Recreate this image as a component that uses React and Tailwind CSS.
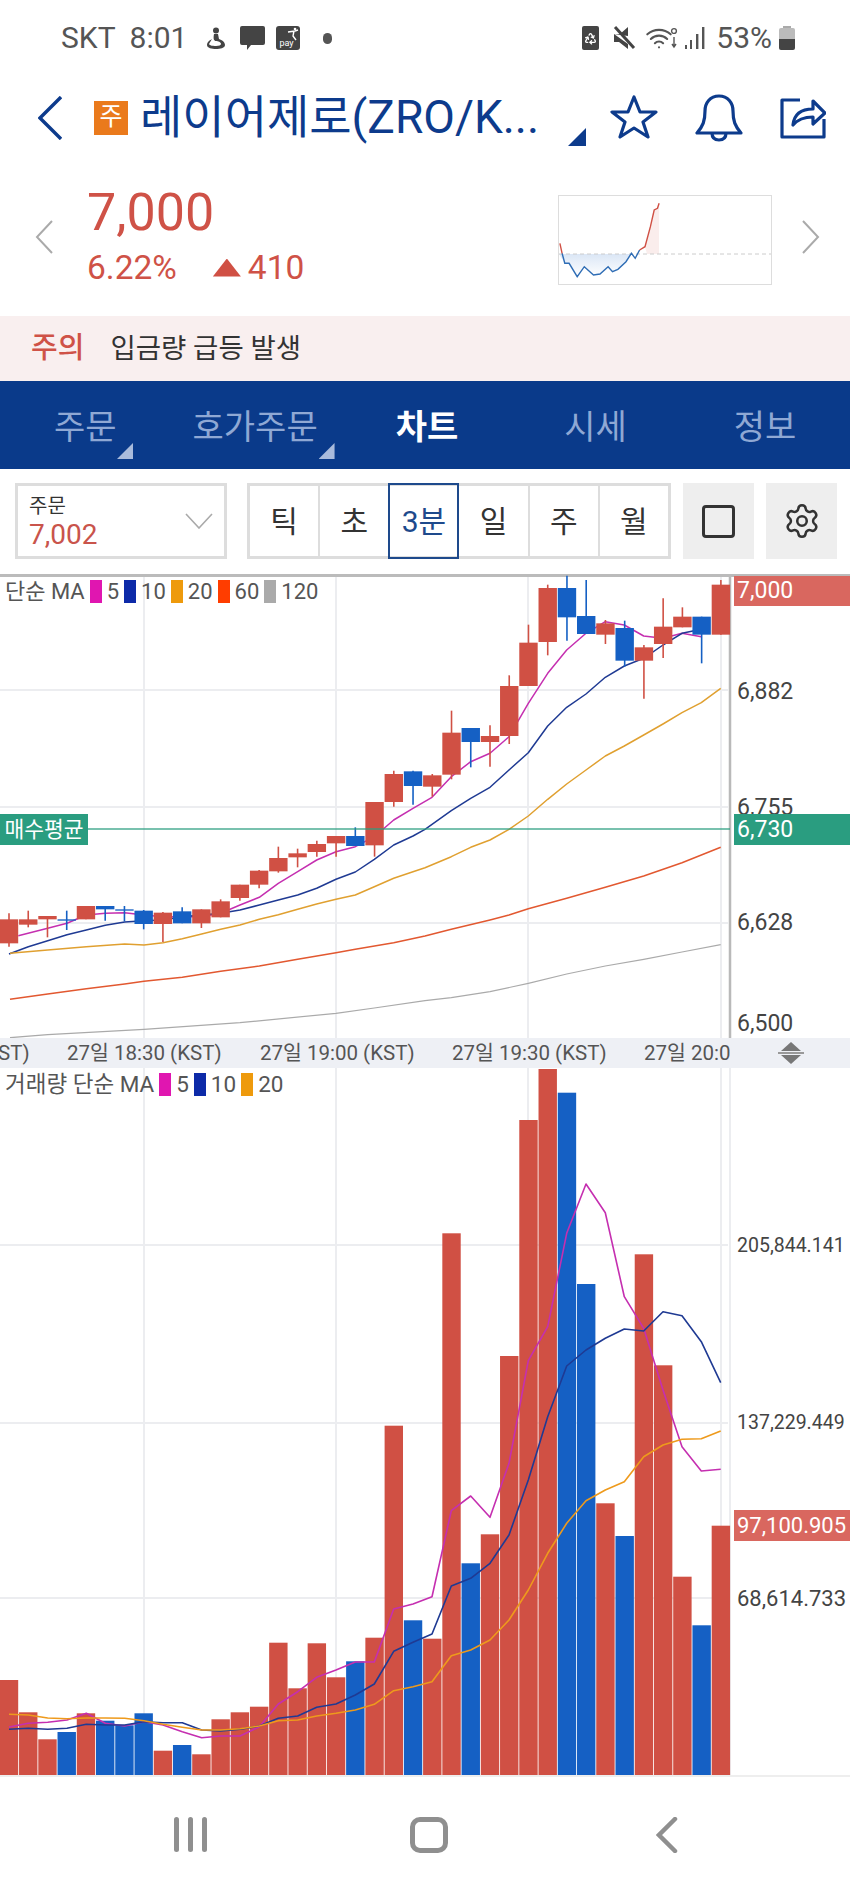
import React from 'react';
import { Settings, Recycle, Wifi } from 'lucide-react';

const RED = '#d05044';
const BLUE = '#1560c4';

// the numbers below were read off the reference crops, so each helper puts one crop back on the page
const c3 = ([x, y]) => [x / 3, 570 + y / 3];
const c4 = ([x, y]) => [425 + x / 3, 570 + y / 3];
const c6 = ([x, y]) => [425 + x / 3, 1030 + y / 3];
const c7 = ([x, y]) => [x / 3, 1480 + y / 3];
const c8 = ([x, y]) => [425 + x / 3, 1480 + y / 3];
const toPoints = (pts) => pts.map(([x, y]) => `${x.toFixed(1)},${y.toFixed(1)}`).join(' ');
const candleX = (i) => 9 + 19.24 * i;

// [up, wickTop, bodyTop, bodyBottom, wickBottom]
const candles = [
  [1, 1030, 1048, 1120, 1130], [1, 1022, 1048, 1064, 1072], [1, 1038, 1038, 1048, 1102], [0, 1022, 1048, 1052, 1080],
  [1, 1008, 1008, 1048, 1048], [0, 1008, 1008, 1018, 1052], [0, 1008, 1018, 1022, 1054], [0, 1020, 1022, 1062, 1078],
  [1, 1026, 1028, 1062, 1116], [0, 1012, 1024, 1060, 1060], [1, 1018, 1018, 1060, 1074], [1, 988, 994, 1042, 1042],
  [1, 944, 944, 984, 992], [1, 900, 902, 944, 955], [1, 830, 864, 904, 908], [1, 836, 850, 862, 892],
  [1, 812, 822, 846, 860], [1, 798, 798, 820, 860], [0, 772, 798, 828, 828], [1, 696, 696, 826, 860],
  [1, 602, 612, 696, 710], [0, 602, 604, 648, 704], [1, 612, 616, 650, 680], [1, 422, 488, 614, 628],
  [0, 474, 474, 516, 592], [1, 466, 498, 516, 590], [1, 316, 348, 498, 522], [1, 164, 218, 348, 348],
  [1, 44, 54, 216, 256], [0, 17, 54, 142, 212], [0, 30, 138, 192, 192], [1, 150, 160, 194, 222],
  [0, 152, 174, 272, 290], [1, 225, 232, 272, 386], [1, 85, 170, 222, 264], [1, 112, 140, 172, 172],
  [0, 140, 140, 194, 280], [1, 30, 44, 194, 194],
];

const priceLines = [
  {
    color: '#c52fb0', width: 1.5,
    pts: [[55, 1097], [143, 1075], [201, 1060], [259, 1035], [316, 1030], [374, 1028], [432, 1035], [489, 1040], [547, 1040], [605, 1040], [662, 1030], [720, 1005], [778, 982], [835, 940], [893, 905], [950, 870], [1008, 845], [1066, 830], [1123, 800], [1181, 750], [1239, 715]].map(c3)
      .concat([[21, 682], [79, 620], [137, 575], [195, 550], [252, 500], [310, 400], [368, 310], [425, 240], [483, 190], [541, 155], [598, 165], [656, 198], [714, 205], [771, 190], [829, 200]].map(c4)),
  },
  {
    color: '#1f3a93', width: 1.5,
    pts: [[27, 1152], [85, 1130], [143, 1112], [201, 1094], [259, 1080], [316, 1066], [374, 1056], [432, 1052], [489, 1050], [547, 1040], [605, 1035], [662, 1030], [720, 1020], [778, 1005], [835, 990], [893, 975], [950, 955], [1008, 928], [1066, 906], [1123, 868], [1181, 825], [1239, 798]].map(c3)
      .concat([[0, 778], [79, 722], [137, 685], [195, 652], [252, 600], [310, 548], [368, 468], [425, 412], [483, 372], [541, 322], [598, 288], [656, 265], [714, 225], [771, 190], [829, 178]].map(c4)),
  },
  {
    color: '#e0a030', width: 1.5,
    pts: [[30, 1150], [143, 1140], [259, 1130], [374, 1122], [432, 1125], [489, 1118], [547, 1106], [605, 1092], [662, 1078], [720, 1065], [778, 1048], [835, 1034], [893, 1018], [950, 1002], [1008, 988], [1066, 975], [1123, 950], [1181, 925], [1239, 905]].map(c3)
      .concat([[0, 893], [79, 860], [137, 832], [195, 810], [252, 778], [310, 738], [368, 688], [425, 642], [483, 600], [541, 558], [598, 528], [656, 495], [714, 462], [771, 428], [829, 398], [887, 355]].map(c4)),
  },
  {
    color: '#e25830', width: 1.5,
    pts: [[30, 1288], [143, 1272], [259, 1256], [374, 1242], [432, 1234], [547, 1222], [662, 1204], [778, 1188], [893, 1168], [1008, 1148], [1066, 1138], [1181, 1118], [1275, 1098]].map(c3)
      .concat([[79, 1078], [195, 1050], [252, 1035], [310, 1016], [425, 985], [541, 952], [656, 918], [771, 878], [887, 832]].map(c4)),
  },
  {
    color: '#aaaaaa', width: 1.2,
    pts: [[30, 1403], [143, 1394], [432, 1378], [720, 1358], [1008, 1330], [1123, 1314], [1275, 1292]].map(c3)
      .concat([[79, 1283], [195, 1265], [310, 1240], [425, 1212], [541, 1188], [656, 1168], [771, 1146], [887, 1124]].map(c4)),
  },
];

// [up, page y of the bar top]
const volumes = [
  [1, 1680], [1, 1712.3], [1, 1739.3], [0, 1732], [1, 1713.3], [0, 1720.7], [0, 1725.3], [0, 1713.3],
  [1, 1750.7], [0, 1745], [1, 1754.3], [1, 1719.3], [1, 1712.3], [1, 1706.7], [1, 1642.7], [1, 1688.3],
  [1, 1643.3], [1, 1677.3], [0, 1661.3], [1, 1637.7], [1, 1425.7], [0, 1620.3], [1, 1638.7], [1, 1233.3],
  [0, 1563.3], [1, 1534.3], [1, 1356], [1, 1120], [1, 1069], [0, 1092.7], [0, 1284], [1, 1503.3],
  [0, 1536], [1, 1254.3], [1, 1365.3], [1, 1576.7], [0, 1625.3], [1, 1525.7],
];

const volumeLines = [
  {
    color: '#c52fb0',
    pts: [[27, 741], [85, 730], [143, 727], [201, 720], [259, 700], [316, 730], [374, 738], [432, 725], [489, 735], [547, 755], [605, 773], [662, 768], [720, 768], [778, 740], [835, 672], [893, 635], [950, 592], [1008, 570], [1066, 546], [1123, 546], [1181, 387], [1239, 372]].map(c7)
      .concat([[21, 350], [79, 92], [137, 48], [195, 112]].map(c8))
      .concat([[252, 1300], [310, 992], [368, 890], [425, 610], [483, 462], [541, 548], [598, 800], [656, 895], [714, 1080], [771, 1250], [829, 1323], [887, 1318]].map(c6)),
  },
  {
    color: '#1f3a93',
    pts: [[27, 748], [85, 745], [143, 748], [201, 745], [259, 733], [316, 735], [374, 735], [432, 725], [489, 728], [547, 728], [605, 750], [662, 753], [720, 748], [778, 738], [835, 715], [893, 708], [950, 682], [1008, 672], [1066, 645], [1123, 612], [1181, 514], [1239, 487]].map(c7)
      .concat([[21, 462], [79, 318], [137, 295], [195, 250], [252, 165]].map(c8))
      .concat([[310, 1350], [368, 1160], [425, 1008], [483, 960], [541, 925], [598, 897], [656, 903], [714, 845], [771, 857], [829, 935], [887, 1058]].map(c6)),
  },
  {
    color: '#ee9a1c',
    pts: [[27, 703], [85, 705], [143, 714], [201, 716], [259, 714], [316, 714], [374, 715], [432, 722], [489, 733], [547, 742], [605, 750], [662, 750], [720, 746], [778, 738], [835, 722], [893, 720], [950, 708], [1008, 700], [1066, 690], [1123, 673], [1181, 632], [1239, 620]].map(c7)
      .concat([[21, 605], [79, 527], [137, 510], [195, 480], [252, 420], [310, 330], [368, 220], [425, 130], [483, 62], [541, 30], [598, 5]].map(c8))
      .concat([[656, 1280], [714, 1245], [771, 1228], [829, 1226], [887, 1203]].map(c6)),
  },
];

const sparkline = [[1033, 730], [1037, 760], [1042, 790], [1050, 790], [1065, 830], [1078, 800], [1095, 825], [1107, 822], [1122, 800], [1130, 815], [1140, 808], [1155, 785], [1165, 760], [1172, 775], [1180, 750], [1190, 740], [1200, 680], [1207, 630], [1213, 625], [1216, 610]]
  .map(([x, y]) => [x / 1.845 - 559, y / 3 - 196]);

const Swatch = ({ className }) => <span className={`w-3 h-[23px] ml-[5px] mr-[5px] ${className}`} />;

const Sparkline = () => (
  <svg viewBox="0 0 212 88" className="w-[212px] h-[88px] block">
    <defs>
      <linearGradient id="sparkBlue" x1="0" y1="0" x2="0" y2="1">
        <stop offset="0" stopColor="#1560c4" stopOpacity="0.16" />
        <stop offset="1" stopColor="#1560c4" stopOpacity="0" />
      </linearGradient>
    </defs>
    <polygon points={`0,58 ${toPoints(sparkline.slice(2, 14))} 74,58`} fill="url(#sparkBlue)" />
    <polygon points={`88,58 ${toPoints(sparkline.slice(15))} 100,58`} fill="#d05044" fillOpacity="0.1" />
    <line x1="0" y1="58" x2="212" y2="58" stroke="#ccc" strokeWidth="1" strokeDasharray="4 3" />
    <polyline points={toPoints(sparkline.slice(1, 15))} fill="none" stroke="#2f6db5" strokeWidth="1.4" />
    <polyline points={toPoints(sparkline.slice(0, 2))} fill="none" stroke={RED} strokeWidth="1.4" />
    <polyline points={toPoints(sparkline.slice(14))} fill="none" stroke={RED} strokeWidth="1.4" />
  </svg>
);

const PriceChart = () => (
  <svg viewBox="0 574 850 464" className="w-full h-full block">
    {[690, 807, 923].map((y) => <line key={y} x1="0" y1={y} x2="728" y2={y} stroke="#ecedf0" strokeWidth="2" />)}
    {[144, 336, 528, 721].map((x) => <line key={x} x1={x} y1="574" x2={x} y2="1038" stroke="#ecedf0" strokeWidth="2" />)}
    <line x1="730" y1="574" x2="730" y2="1038" stroke="#b9b9b9" strokeWidth="2.5" />
    <line x1="0" y1="575.5" x2="850" y2="575.5" stroke="#bbbbbb" strokeWidth="3" />
    {priceLines.map((l) => <polyline key={l.color} points={toPoints(l.pts)} fill="none" stroke={l.color} strokeWidth={l.width} strokeLinejoin="round" />)}
    {candles.map(([up, wt, bt, bb, wb], i) => {
      const x = candleX(i);
      const fill = up ? RED : BLUE;
      return (
        <g key={i}>
          <line x1={x} y1={570 + wt / 3} x2={x} y2={570 + wb / 3} stroke={fill} strokeWidth="1.6" />
          <rect x={x - 9.2} y={570 + bt / 3} width="18.4" height={(bb - bt) / 3} fill={fill} />
        </g>
      );
    })}
    <line x1="88" y1="829" x2="730" y2="829" stroke="#2a9d80" strokeWidth="1.5" strokeOpacity="0.85" />
  </svg>
);

const VolumeChart = () => (
  <svg viewBox="0 1068 850 707" className="w-full h-full block">
    {[1245, 1423, 1598].map((y) => <line key={y} x1="0" y1={y} x2="728" y2={y} stroke="#ecedf0" strokeWidth="2" />)}
    {[144, 336, 528, 721, 730].map((x) => <line key={x} x1={x} y1="1068" x2={x} y2="1775" stroke="#ecedf0" strokeWidth="2" />)}
    {volumes.map(([up, top], i) => (
      <rect key={i} x={candleX(i) - 9.2} y={top} width="18.4" height={1775 - top} fill={up ? RED : BLUE} />
    ))}
    {volumeLines.map((l) => <polyline key={l.color} points={toPoints(l.pts)} fill="none" stroke={l.color} strokeWidth="1.6" strokeLinejoin="round" />)}
  </svg>
);

const App = () => {
  return (
    <div className="w-[850px] h-[1889px] bg-white flex flex-col overflow-hidden font-[Roboto,'Noto_Sans_CJK_KR',sans-serif]">
      {/* Status bar */}
      <div className="h-[76px] flex items-center text-[#555] text-[30px] leading-none">
        <span className="ml-[61px]">SKT</span>
        <span className="ml-[14px]">8:01</span>
        <svg viewBox="0 0 22 22" className="w-[22px] h-[22px] ml-[18px]" fill="#444">
          <circle cx="11" cy="3.5" r="3" />
          <path d="M9 7h4l1 5c3 1 6 3 6 6 0 3-5 4-9 4s-9-1-9-4c0-3 3-5 5-6l-3 5c0 1 3 2 7 2 3 0 5-1 5-2 0-2-3-3-5-3-2 0-3-2-2-7z" />
        </svg>
        <svg viewBox="0 0 25 24" className="w-[25px] h-[24px] ml-[13px]" fill="#444">
          <path d="M2 0h21a2 2 0 0 1 2 2v15a2 2 0 0 1-2 2H11l-4 5v-5H2a2 2 0 0 1-2-2V2a2 2 0 0 1 2-2z" />
        </svg>
        <div className="relative w-6 h-[24px] ml-[11px] bg-[#444] rounded-[3px] overflow-hidden">
          <span className="absolute left-[3px] bottom-[2px] text-white text-[9px] leading-none">pay</span>
          <svg viewBox="0 0 12 14" className="absolute right-[1px] top-[1px] w-[12px] h-[14px]" fill="none" stroke="#fff" strokeWidth="1.4">
            <circle cx="8" cy="2" r="1.3" fill="#fff" stroke="none" />
            <path d="M1 5l7-1 3-1M7 4l-1 5 3 4" />
          </svg>
        </div>
        <span className="w-[9px] h-[11px] ml-[23px] rounded-full bg-[#555]" />

        <div className="ml-auto flex items-center">
          <div className="relative w-[17px] h-6 bg-[#444] rounded-[2px] flex items-center justify-center">
            <Recycle className="w-[13px] h-[13px] text-white" strokeWidth={2.4} />
          </div>
          <svg viewBox="0 0 23 24" className="w-[23px] h-6 ml-[14px]" fill="#444">
            <path d="M1 8h6l8-7v9z" />
            <path d="M1 8v8h5l9 7v-5z" />
            <path d="M2 1l19 21" stroke="#444" strokeWidth="3" />
          </svg>
          <div className="relative w-[31px] h-[23px] ml-[11px]">
            <Wifi className="absolute left-[-2px] top-[-3px] w-[28px] h-[28px] text-[#555]" strokeWidth={1.8} />
            <svg viewBox="0 0 8 22" className="absolute right-0 top-0 w-2 h-[22px]" fill="none" stroke="#555" strokeWidth="1.4">
              <circle cx="4" cy="4" r="2.4" />
              <path d="M4 10v10M2 17l2 3 2-3" />
            </svg>
          </div>
          <svg viewBox="0 0 20 22" className="w-5 h-[22px] ml-[7px]" fill="#555">
            <rect x="0" y="18" width="2" height="4" />
            <rect x="5" y="13" width="2" height="9" />
            <rect x="11" y="7" width="2.4" height="15" />
            <rect x="17" y="0" width="2.4" height="22" />
          </svg>
          <span className="ml-[11px]">53%</span>
          <div className="ml-[7px] mr-[55px] w-4 h-6 flex flex-col items-center">
            <span className="w-2 h-[2px] bg-[#aaa]" />
            <span className="w-4 h-[11px] bg-[#bbb] rounded-t-[2px]" />
            <span className="w-4 h-[11px] bg-[#444] rounded-b-[2px]" />
          </div>
        </div>
      </div>

      {/* Title row */}
      <div className="relative h-[84px] flex items-center text-[#0d3b8c]">
        <svg viewBox="0 0 24 44" className="w-6 h-11 ml-[38px]" fill="none" stroke="currentColor" strokeWidth="3.4">
          <path d="M23 1L2 22l21 21" />
        </svg>
        <span className="ml-[32px] w-[34px] h-[34px] bg-[#ea7a1c] text-white text-[25px] leading-[32px] text-center">주</span>
        <span className="ml-[12px] -mt-[2px] text-[46px] leading-none whitespace-nowrap">레이어제로(ZRO/K...</span>
        <span className="absolute left-[568px] top-[52px] w-[18px] h-[18px] bg-[#0d3b8c] [clip-path:polygon(100%_0,100%_100%,0_100%)]" />
        <svg viewBox="0 0 48 46" className="absolute left-[610px] top-[18px] w-[48px] h-[46px]" fill="none" stroke="currentColor" strokeWidth="3.2" strokeLinejoin="round">
          <path d="M24 3l6 15h16l-13 10 5 15-14-9-14 9 5-15L2 18h16z" />
        </svg>
        <svg viewBox="0 0 48 48" className="absolute left-[695px] top-[18px] w-[48px] h-[48px]" fill="none" stroke="currentColor" strokeWidth="3.2" strokeLinejoin="round">
          <path d="M24 2c-9 0-14 7-14 15 0 10-2 15-8 22h44c-6-7-8-12-8-22 0-8-5-15-14-15z" />
          <path d="M17 39c0 5 3 7 7 7s7-2 7-7" />
        </svg>
        <svg viewBox="0 0 46 44" className="absolute left-[780px] top-[19px] w-[46px] h-[44px]" fill="none" stroke="currentColor" strokeWidth="3.2" strokeLinejoin="round">
          <path d="M20 5H2v37h42V24" />
          <path d="M13 30c1-10 7-16 20-16V6l12 12-12 11v-7c-9 0-15 2-20 8z" />
        </svg>
      </div>

      {/* Price row */}
      <div className="h-[156px] flex items-center pb-[2px]">
        <svg viewBox="0 0 18 34" className="w-[18px] h-[34px] ml-[35px]" fill="none" stroke="#aaa" strokeWidth="2">
          <path d="M17 1L2 17l15 16" />
        </svg>
        <div className="ml-[34px] -mt-[6px] flex flex-col text-[#cf5247]">
          <span className="text-[52px] leading-[60px]">7,000</span>
          <div className="mt-[7px] flex items-center text-[33.5px] leading-[36px]">
            <span>6.22%</span>
            <span className="ml-[36px] w-[28px] h-[18px] bg-[#d05044] [clip-path:polygon(50%_0,100%_100%,0_100%)]" />
            <span className="ml-[7px]">410</span>
          </div>
        </div>
        <div className="ml-auto mt-[5px] border border-[#ddd]">
          <Sparkline />
        </div>
        <svg viewBox="0 0 18 34" className="w-[18px] h-[34px] ml-[30px] mr-[30px]" fill="none" stroke="#aaa" strokeWidth="2">
          <path d="M1 1l15 16L1 33" />
        </svg>
      </div>

      {/* Notice */}
      <div className="h-[65px] bg-[#f9efef] flex items-center text-[27.5px] leading-none">
        <span className="ml-[31px] text-[29px] text-[#cf5247] font-medium">주의</span>
        <span className="ml-[26px] text-[#333]">입금량 급등 발생</span>
      </div>

      {/* Tabs */}
      <div className="h-[88px] pt-[4px] bg-[#0a3a8a] flex items-center text-[34px] leading-none text-[#8fa8d4]">
        <div className="relative ml-[54px] flex">
          주문
          <span className="absolute left-[63px] top-[33px] w-4 h-[16px] bg-[#a9bbdc] [clip-path:polygon(100%_0,100%_100%,0_100%)]" />
        </div>
        <div className="relative ml-[76px] flex">
          호가주문
          <span className="absolute left-[126px] top-[33px] w-4 h-[16px] bg-[#a9bbdc] [clip-path:polygon(100%_0,100%_100%,0_100%)]" />
        </div>
        <span className="ml-[78px] text-white font-bold">차트</span>
        <span className="ml-[106px]">시세</span>
        <span className="ml-[107px]">정보</span>
      </div>

      {/* Toolbar */}
      <div className="h-[105px] pt-[14px] pl-[15px] flex items-start text-[#333]">
        <div className="relative w-[212px] h-[76px] border-[3px] border-[#ddd] pl-[11px] pt-[8px]">
          <div className="text-[20px] leading-[24px]">주문</div>
          <div className="text-[28px] leading-[34px] text-[#c9544b]">7,002</div>
          <svg viewBox="0 0 28 16" className="absolute right-[11px] top-[27px] w-[28px] h-4" fill="none" stroke="#aaa" strokeWidth="1.6">
            <path d="M1 1l13 14L27 1" />
          </svg>
        </div>
        <div className="ml-[20px] w-[424px] h-[76px] border-[3px] border-[#ddd] flex text-[30px]">
          <div className="flex-1 flex items-center justify-center border-r-[2px] border-[#ddd]">틱</div>
          <div className="flex-1 flex items-center justify-center">초</div>
          <div className="w-[71px] shrink-0 -my-[3px] flex items-center justify-center border-[2px] border-[#1e4a8c] text-[#1e4a8c]">3분</div>
          <div className="flex-1 flex items-center justify-center border-r-[2px] border-[#ddd]">일</div>
          <div className="flex-1 flex items-center justify-center border-r-[2px] border-[#ddd]">주</div>
          <div className="flex-1 flex items-center justify-center">월</div>
        </div>
        <div className="ml-[12px] w-[71px] h-[76px] bg-[#eeeeee] flex items-center justify-center">
          <span className="w-[33px] h-[33px] border-[3px] border-[#333] rounded-[4px]" />
        </div>
        <div className="ml-[12px] w-[71px] h-[76px] bg-[#eeeeee] flex items-center justify-center">
          <Settings className="w-[38px] h-[38px] text-[#333]" strokeWidth={1.6} />
        </div>
      </div>

      {/* Price chart */}
      <div className="relative h-[464px] text-[#444] text-[22px] leading-none">
        <PriceChart />
        <div className="absolute left-[5px] top-[6px] flex items-center text-[#555] text-[22px] leading-[23px]">
          <span>단순 MA</span>
          <Swatch className="bg-[#e016b0]" />
          <span>5</span>
          <Swatch className="bg-[#0d2aa8]" />
          <span>10</span>
          <Swatch className="bg-[#ee9a0c]" />
          <span>20</span>
          <Swatch className="bg-[#ff3d00]" />
          <span>60</span>
          <Swatch className="bg-[#aaaaaa]" />
          <span>120</span>
        </div>
        <div className="absolute left-0 top-[240px] w-[88px] h-[31px] bg-[#2a9d80] text-white text-[21.5px] leading-[31px] text-center">매수평균</div>
        <div className="absolute left-[734px] top-[2px] w-[116px] h-[30px] bg-[#d9675f] text-white text-[23px] leading-[30px] pl-[3px]">7,000</div>
        <span className="absolute left-[737px] top-[106px] text-[23px]">6,882</span>
        <span className="absolute left-[737px] top-[222px] text-[23px]">6,755</span>
        <div className="absolute left-[734px] top-[240px] w-[116px] h-[31px] bg-[#2a9d80] text-white text-[23px] leading-[31px] pl-[3px]">6,730</div>
        <span className="absolute left-[737px] top-[337px] text-[23px]">6,628</span>
        <span className="absolute left-[737px] top-[438px] text-[23px]">6,500</span>
      </div>

      {/* Time axis */}
      <div className="relative h-[30px] bg-[#eef0f5] text-[#555] text-[20.5px] leading-[30px] overflow-hidden">
        <div className="absolute left-0 top-0 w-[730px] h-[30px] overflow-hidden whitespace-nowrap">
          <span className="absolute left-[-125px]">27일 18:00 (KST)</span>
          <span className="absolute left-[67px]">27일 18:30 (KST)</span>
          <span className="absolute left-[260px]">27일 19:00 (KST)</span>
          <span className="absolute left-[452px]">27일 19:30 (KST)</span>
          <span className="absolute left-[644px]">27일 20:00 (KST)</span>
        </div>
        <svg viewBox="0 0 26 22" className="absolute left-[778px] top-[4px] w-[26px] h-[22px]" fill="#777">
          <path d="M13 0l10 9H3z" />
          <rect x="0" y="10" width="26" height="2" fill="#999" />
          <path d="M3 13h20l-10 9z" />
        </svg>
      </div>

      {/* Volume chart */}
      <div className="relative h-[707px] text-[#444] leading-none">
        <VolumeChart />
        <div className="absolute left-[5px] top-[5px] flex items-center text-[#555] text-[22.5px] leading-[23px]">
          <span>거래량 단순 MA</span>
          <Swatch className="bg-[#e016b0]" />
          <span>5</span>
          <Swatch className="bg-[#0d2aa8]" />
          <span>10</span>
          <Swatch className="bg-[#ee9a0c]" />
          <span>20</span>
        </div>
        <span className="absolute left-[737px] top-[168px] text-[19.5px]">205,844.141</span>
        <span className="absolute left-[737px] top-[345px] text-[19.5px]">137,229.449</span>
        <div className="absolute left-[734px] top-[442px] w-[116px] h-[31px] bg-[#d9675f] text-white text-[22px] leading-[31px] pl-[3px]">97,100.905</div>
        <span className="absolute left-[737px] top-[520px] text-[22px]">68,614.733</span>
      </div>

      {/* Android nav */}
      <div className="relative flex-1 border-t-[2px] border-[#eeeeee]">
        <div className="absolute left-[174px] top-[40px] flex gap-[9px]">
          <span className="w-[5px] h-[35px] bg-[#8f8f8f] rounded-full" />
          <span className="w-[5px] h-[35px] bg-[#8f8f8f] rounded-full" />
          <span className="w-[5px] h-[35px] bg-[#8f8f8f] rounded-full" />
        </div>
        <span className="absolute left-[410px] top-[40px] w-[38px] h-[36px] border-[5px] border-[#8f8f8f] rounded-[10px]" />
        <svg viewBox="0 0 22 36" className="absolute left-[656px] top-[40px] w-[22px] h-[36px]" fill="none" stroke="#8f8f8f" strokeWidth="4.5" strokeLinecap="round">
          <path d="M19 2L3 18l16 16" />
        </svg>
      </div>
    </div>
  );
};

export default App;
